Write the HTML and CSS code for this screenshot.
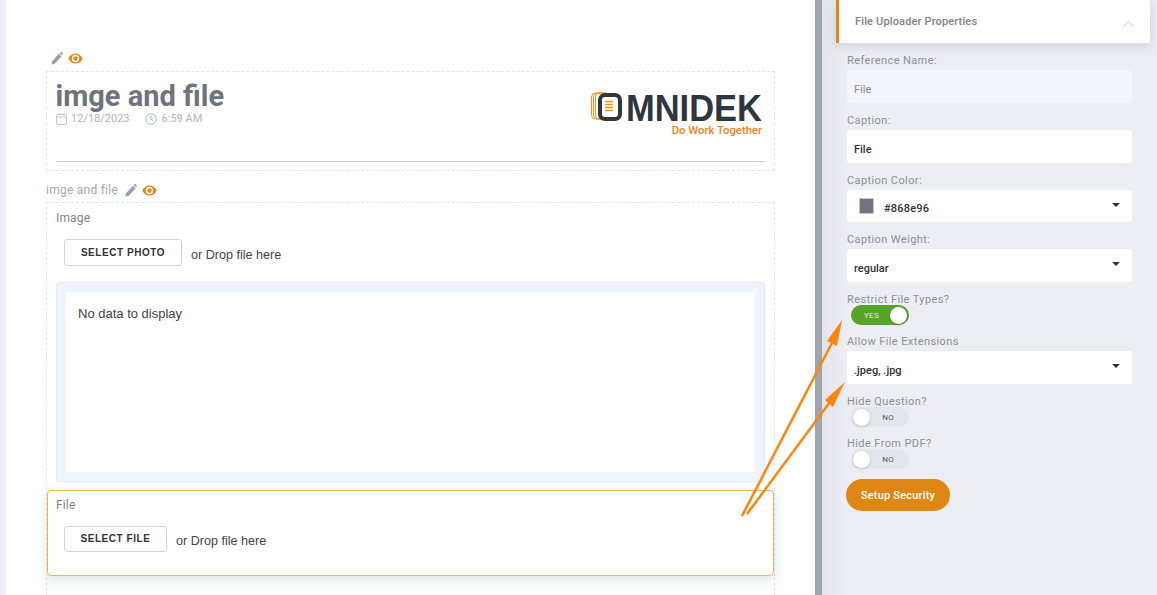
FILE: index.html
```html
<!DOCTYPE html>
<html lang="en">
<head>
<meta charset="utf-8">
<title>File Uploader Properties</title>
<link rel="stylesheet" href="styles.css">
</head>
<body>
<div class="app">
  <div class="strip"></div>
  <main class="canvas">
    <div class="icon-row">
      <svg class="ic-pencil" viewBox="0 0 13 14"><path d="M0.5 13.5l0.7-3.6 7.4-8 2.9 2.7-7.4 8z"/><path d="M9.4 1.1l0.8-0.8c0.4-0.4 1-0.4 1.4 0l1 1c0.4 0.4 0.4 1 0 1.4l-0.8 0.8z"/></svg>
      <svg class="ic-eye" viewBox="0 0 15 11"><path fill-rule="evenodd" d="M7.5 0.5c3.2 0 5.9 2 7.2 5-1.3 3-4 5-7.2 5s-5.900-2-7.200-5c1.300-3 4-5 7.200-5zM7.500 1.800a3.700 3.700 0 1 0 0 7.400 3.700 3.700 0 0 0 0-7.400z"/><circle cx="7.500" cy="5.500" r="2.200"/></svg>
    </div>
    <header class="form-head">
      <div class="head-top">
        <div class="head-info">
          <h1 class="title">imge and file</h1>
          <div class="meta">
            <svg class="ic-meta" viewBox="0 0 11 12"><rect x="0.500" y="1.500" width="10" height="10" rx="1.500"/><path d="M0.500 4h10M3 0v2.500M8 0v2.500"/></svg>
            <span class="meta-text">12/18/2023</span>
            <svg class="ic-meta ic-clock" viewBox="0 0 12 12"><circle cx="6" cy="6" r="5.200"/><path d="M6 2.800v3.400l2.200 1.300"/></svg>
            <span class="meta-text">6:59 AM</span>
          </div>
        </div>
        <div class="logo">
          <svg class="logo-mark" viewBox="0 0 172 30">
            <g class="logo-coils"><rect x="0.500" y="1" width="14" height="26" rx="4"/><rect x="2.500" y="1" width="14" height="26" rx="4"/><rect x="4.500" y="1" width="14" height="26" rx="4"/></g>
            <rect class="logo-o" x="9" y="3" width="20" height="24" rx="5"/>
            <path class="logo-bars" d="M14 9.500h8M14 12.500h8M14 15.500h8M14 18.500h8"/>
            <text class="logo-word" x="35" y="29" textLength="136" lengthAdjust="spacingAndGlyphs">MNIDEK</text>
          </svg>
          <div class="logo-tag">Do Work Together</div>
        </div>
      </div>
      <div class="head-line"></div>
    </header>
    <div class="section-label">
      <span>imge and file</span>
      <svg class="ic-pencil" viewBox="0 0 13 14"><path d="M0.500 13.500l0.700-3.600 7.400-8 2.900 2.700-7.400 8z"/><path d="M9.400 1.100l0.800-0.800c0.400-0.400 1-0.400 1.400 0l1 1c0.400 0.400 0.400 1 0 1.400l-0.800 0.800z"/></svg>
      <svg class="ic-eye" viewBox="0 0 15 11"><path fill-rule="evenodd" d="M7.500 0.500c3.200 0 5.900 2 7.200 5-1.300 3-4 5-7.200 5s-5.900-2-7.200-5c1.300-3 4-5 7.200-5zM7.500 1.800a3.700 3.700 0 1 0 0 7.400 3.700 3.700 0 0 0 0-7.400z"/><circle cx="7.500" cy="5.500" r="2.200"/></svg>
    </div>
    <section class="section">
      <div class="question question-image">
        <div class="q-label">Image</div>
        <div class="upload">
          <button class="btn-upload btn-photo">SELECT PHOTO</button>
          <span class="drop">or Drop file here</span>
        </div>
        <div class="grid-box"><div class="grid-inner">No data to display</div></div>
      </div>
      <div class="question-file">
        <div class="q-label">File</div>
        <div class="upload upload-file">
          <button class="btn-upload btn-file">SELECT FILE</button>
          <span class="drop">or Drop file here</span>
        </div>
      </div>
      <div class="section-rest"></div>
    </section>
  </main>
  <div class="splitter"></div>
  <aside class="panel">
    <div class="panel-head">
      <span>File Uploader Properties</span>
      <svg class="ic-chevron" viewBox="0 0 11 6"><path d="M0.500 5.500L5.500 0.700l5 4.800"/></svg>
    </div>
    <div class="fields">
      <div class="field">
        <label class="f-label">Reference Name:</label>
        <div class="control control-off">File</div>
      </div>
      <div class="field">
        <label class="f-label">Caption:</label>
        <div class="control">File</div>
      </div>
      <div class="field">
        <label class="f-label">Caption Color:</label>
        <div class="control control-color"><span class="swatch"></span><span class="hex">#868e96</span><span class="caret"></span></div>
      </div>
      <div class="field">
        <label class="f-label">Caption Weight:</label>
        <div class="control">regular<span class="caret"></span></div>
      </div>
      <div class="field field-toggle">
        <label class="f-label">Restrict File Types?</label>
        <div class="toggle toggle-on"><span class="t-text">YES</span><span class="knob"></span></div>
      </div>
      <div class="field">
        <label class="f-label">Allow File Extensions</label>
        <div class="control">.jpeg, .jpg<span class="caret"></span></div>
      </div>
      <div class="field field-toggle">
        <label class="f-label">Hide Question?</label>
        <div class="toggle"><span class="knob"></span><span class="t-text">NO</span></div>
      </div>
      <div class="field field-toggle">
        <label class="f-label">Hide From PDF?</label>
        <div class="toggle"><span class="knob"></span><span class="t-text">NO</span></div>
      </div>
      <button class="btn-security">Setup Security</button>
    </div>
  </aside>
  <svg class="arrows" viewBox="0 0 1157 595">
    <path class="a-line" d="M742 516L833 341"/>
    <path class="a-head" d="M842 320L837 346 827 341z"/>
    <path class="a-line" d="M747 514L830 402"/>
    <path class="a-head" d="M845 382L833 407 825 400z"/>
  </svg>
</div>
</body>
</html>
```
FILE: styles.css
```css
* { box-sizing: border-box; }
html, body { margin: 0; height: 100%; overflow: hidden; background: #fff; }
body { font-family: Roboto, "Liberation Sans", sans-serif; }
.app { position: relative; display: flex; width: 1157px; height: 595px; overflow: hidden; }
.strip { width: 6px; background: #eceef3; flex: none; }

.canvas { width: 809px; flex: none; background: #fff; padding: 51px 40px 0; overflow: hidden; }
.icon-row { display: flex; align-items: center; gap: 5px; height: 15px; margin: 0 0 5px 5px; }
.ic-pencil { width: 12px; height: 13px; fill: #9aa0a8; flex: none; }
.ic-eye { width: 15px; height: 11px; fill: #e08714; flex: none; }

.form-head { height: 100px; border: 1px dashed #dfe6ee; padding: 9px 9px 0; display: flex; flex-direction: column; }
.head-top { display: flex; justify-content: space-between; height: 80px; }
.title { margin: 0 0 0 -0.5px; font-size: 29px; line-height: 30px; font-weight: 700; color: #6c757d; }
.meta { display: flex; align-items: center; height: 16px; }
.meta-text { font-size: 11px; line-height: 16px; color: #adb5bd; }
.ic-meta { width: 11px; height: 12px; fill: none; stroke: #c3c8cf; stroke-width: 1; margin-right: 4px; flex: none; }
.ic-clock { width: 12px; margin-left: 15px; margin-right: 5px; stroke: #adb5bd; }
.logo { width: 172px; margin-top: 11px; margin-right: 2px; display: flex; flex-direction: column; align-items: flex-end; }
.logo-mark { width: 172px; height: 30px; display: block; overflow: visible; }
.logo-coils rect { fill: none; stroke: #f7941e; stroke-width: 1; }
.logo-o { fill: #fff; stroke: #30363d; stroke-width: 4; }
.logo-bars { stroke: #f7941e; stroke-width: 1.500; fill: none; }
.logo-word { font-family: "Liberation Sans", sans-serif; font-weight: 700; font-size: 36px; fill: #30363d; }
.logo-tag { font-size: 11.300px; line-height: 14px; font-weight: 500; color: #f0831e; margin: 2px 1px 0 0; }
.head-line { height: 1px; background: #cfd3d8; }

.section-label { display: flex; align-items: center; gap: 5px; height: 14px; margin: 12px 0 5px; font-size: 12px; line-height: 14px; letter-spacing: 0.25px; color: #a3a9b1; }
.section-label .ic-pencil { margin-left: 2px; }
.section { border: 1px dashed #dfe6ee; border-bottom: 0; }
.question { padding: 8px 9px 0; }
.q-label { font-size: 12px; line-height: 14px; letter-spacing: 0.15px; color: #7c848c; }
.upload { display: flex; align-items: center; margin: 14px 0 0 8px; height: 27px; }
.upload-file { height: 26px; }
.btn-upload { height: 100%; padding: 0 0 1px; border: 1px solid #d2d4d7; border-radius: 3px; background: #fff; font-family: "Liberation Sans", Arial, sans-serif; font-size: 10px; font-weight: 700; letter-spacing: 0.55px; color: #333; }
.btn-photo { width: 118px; }
.btn-file { width: 103px; }
.drop { margin-left: 9px; margin-top: 5px; font-family: "Liberation Sans", Arial, sans-serif; font-size: 12.600px; color: #444; }
.upload-file .drop { margin-top: 4px; }
.grid-box { margin-top: 16px; height: 200px; padding: 10px; background: #f0f4fc; border: 0; box-shadow: inset 0 0 0 1px #e6e9f0; border-radius: 4px; }
.grid-inner { height: 180px; background: #fff; padding: 14px 12px; font-family: "Liberation Sans", Arial, sans-serif; font-size: 13px; line-height: 15px; color: #444; }
.question-file { margin-top: 8px; height: 86px; padding: 7px 8px 0; background: #fff; border: 1px solid #f2b55c; border-radius: 4px; box-shadow: 0 4px 12px rgba(120, 130, 150, 0.25); }
.question-file .upload { margin-left: 8px; }
.section-rest { height: 60px; }

.splitter { width: 7px; flex: none; background: #9ea5ad; }

.panel { width: 335px; flex: none; background: linear-gradient(90deg, #e2e4ea 0, #edeef4 24px); }
.panel-head { position: relative; display: flex; align-items: center; margin-left: 14px; width: 314px; height: 43px; padding-left: 16px; background: #fff; border-left: 3px solid #e08714; box-shadow: 0 3px 10px rgba(130, 135, 160, 0.28); font-size: 11px; font-weight: 500; letter-spacing: 0.15px; color: #7c848c; padding-bottom: 1px; }
.ic-chevron { position: absolute; right: 16px; top: 21px; width: 11px; height: 6px; fill: none; stroke: #b8bdc4; stroke-width: 0.800; }
.fields { padding: 10px 0 0 25px; width: 310px; }
.field { margin-bottom: 10px; }
.f-label { display: block; height: 14px; margin-bottom: 3px; font-size: 11px; line-height: 16px; letter-spacing: 0.4px; color: #8b9098; }
.control { position: relative; display: flex; align-items: center; height: 33px; padding: 5px 7px 0; border-radius: 3px; background: #fff; font-size: 11px; font-weight: 500; color: #2f3338; }
.control-off { background: #f4f5fa; color: #858b93; font-weight: 400; }
.control-color { height: 32px; padding-left: 12px; }
.swatch { width: 15px; height: 16px; background: #6f7680; border: 1px solid #c4c7cc; margin-top: -5px; }
.hex { margin-left: 10px; letter-spacing: 0.2px; }
.caret { position: absolute; right: 12px; top: 13px; width: 0; height: 0; border-left: 4px solid transparent; border-right: 4px solid transparent; border-top: 4px solid #2f3338; }
.field-toggle { margin-bottom: 9px; }
.field-toggle .f-label { margin-bottom: -1px; }
.toggle { position: relative; display: flex; align-items: center; justify-content: space-between; width: 58px; height: 20px; margin-left: 4px; padding: 0 2px; border-radius: 10px; background: #e2e7ee; }
.toggle-on { background: #57a42b; }
.knob { width: 17px; height: 17px; border-radius: 50%; background: #fff; box-shadow: 0 1px 3px rgba(60, 70, 90, 0.25); }
.t-text { font-size: 8px; letter-spacing: 0.3px; color: #555b63; padding-right: 13px; }
.toggle-on .t-text { color: #dcefcf; padding: 0 0 0 11px; }
.btn-security { display: block; width: 104px; height: 32px; margin: 10px 0 0 -1px; padding: 0; border: 0; border-radius: 16px; background: #df8714; color: #fff; font-family: Roboto, sans-serif; font-size: 11px; font-weight: 500; letter-spacing: 0.2px; }

.arrows { position: absolute; left: 0; top: 0; width: 1157px; height: 595px; pointer-events: none; }
.a-line { fill: none; stroke: #ff8409; stroke-width: 2.500; }
.a-head { fill: #ff8409; }
```
